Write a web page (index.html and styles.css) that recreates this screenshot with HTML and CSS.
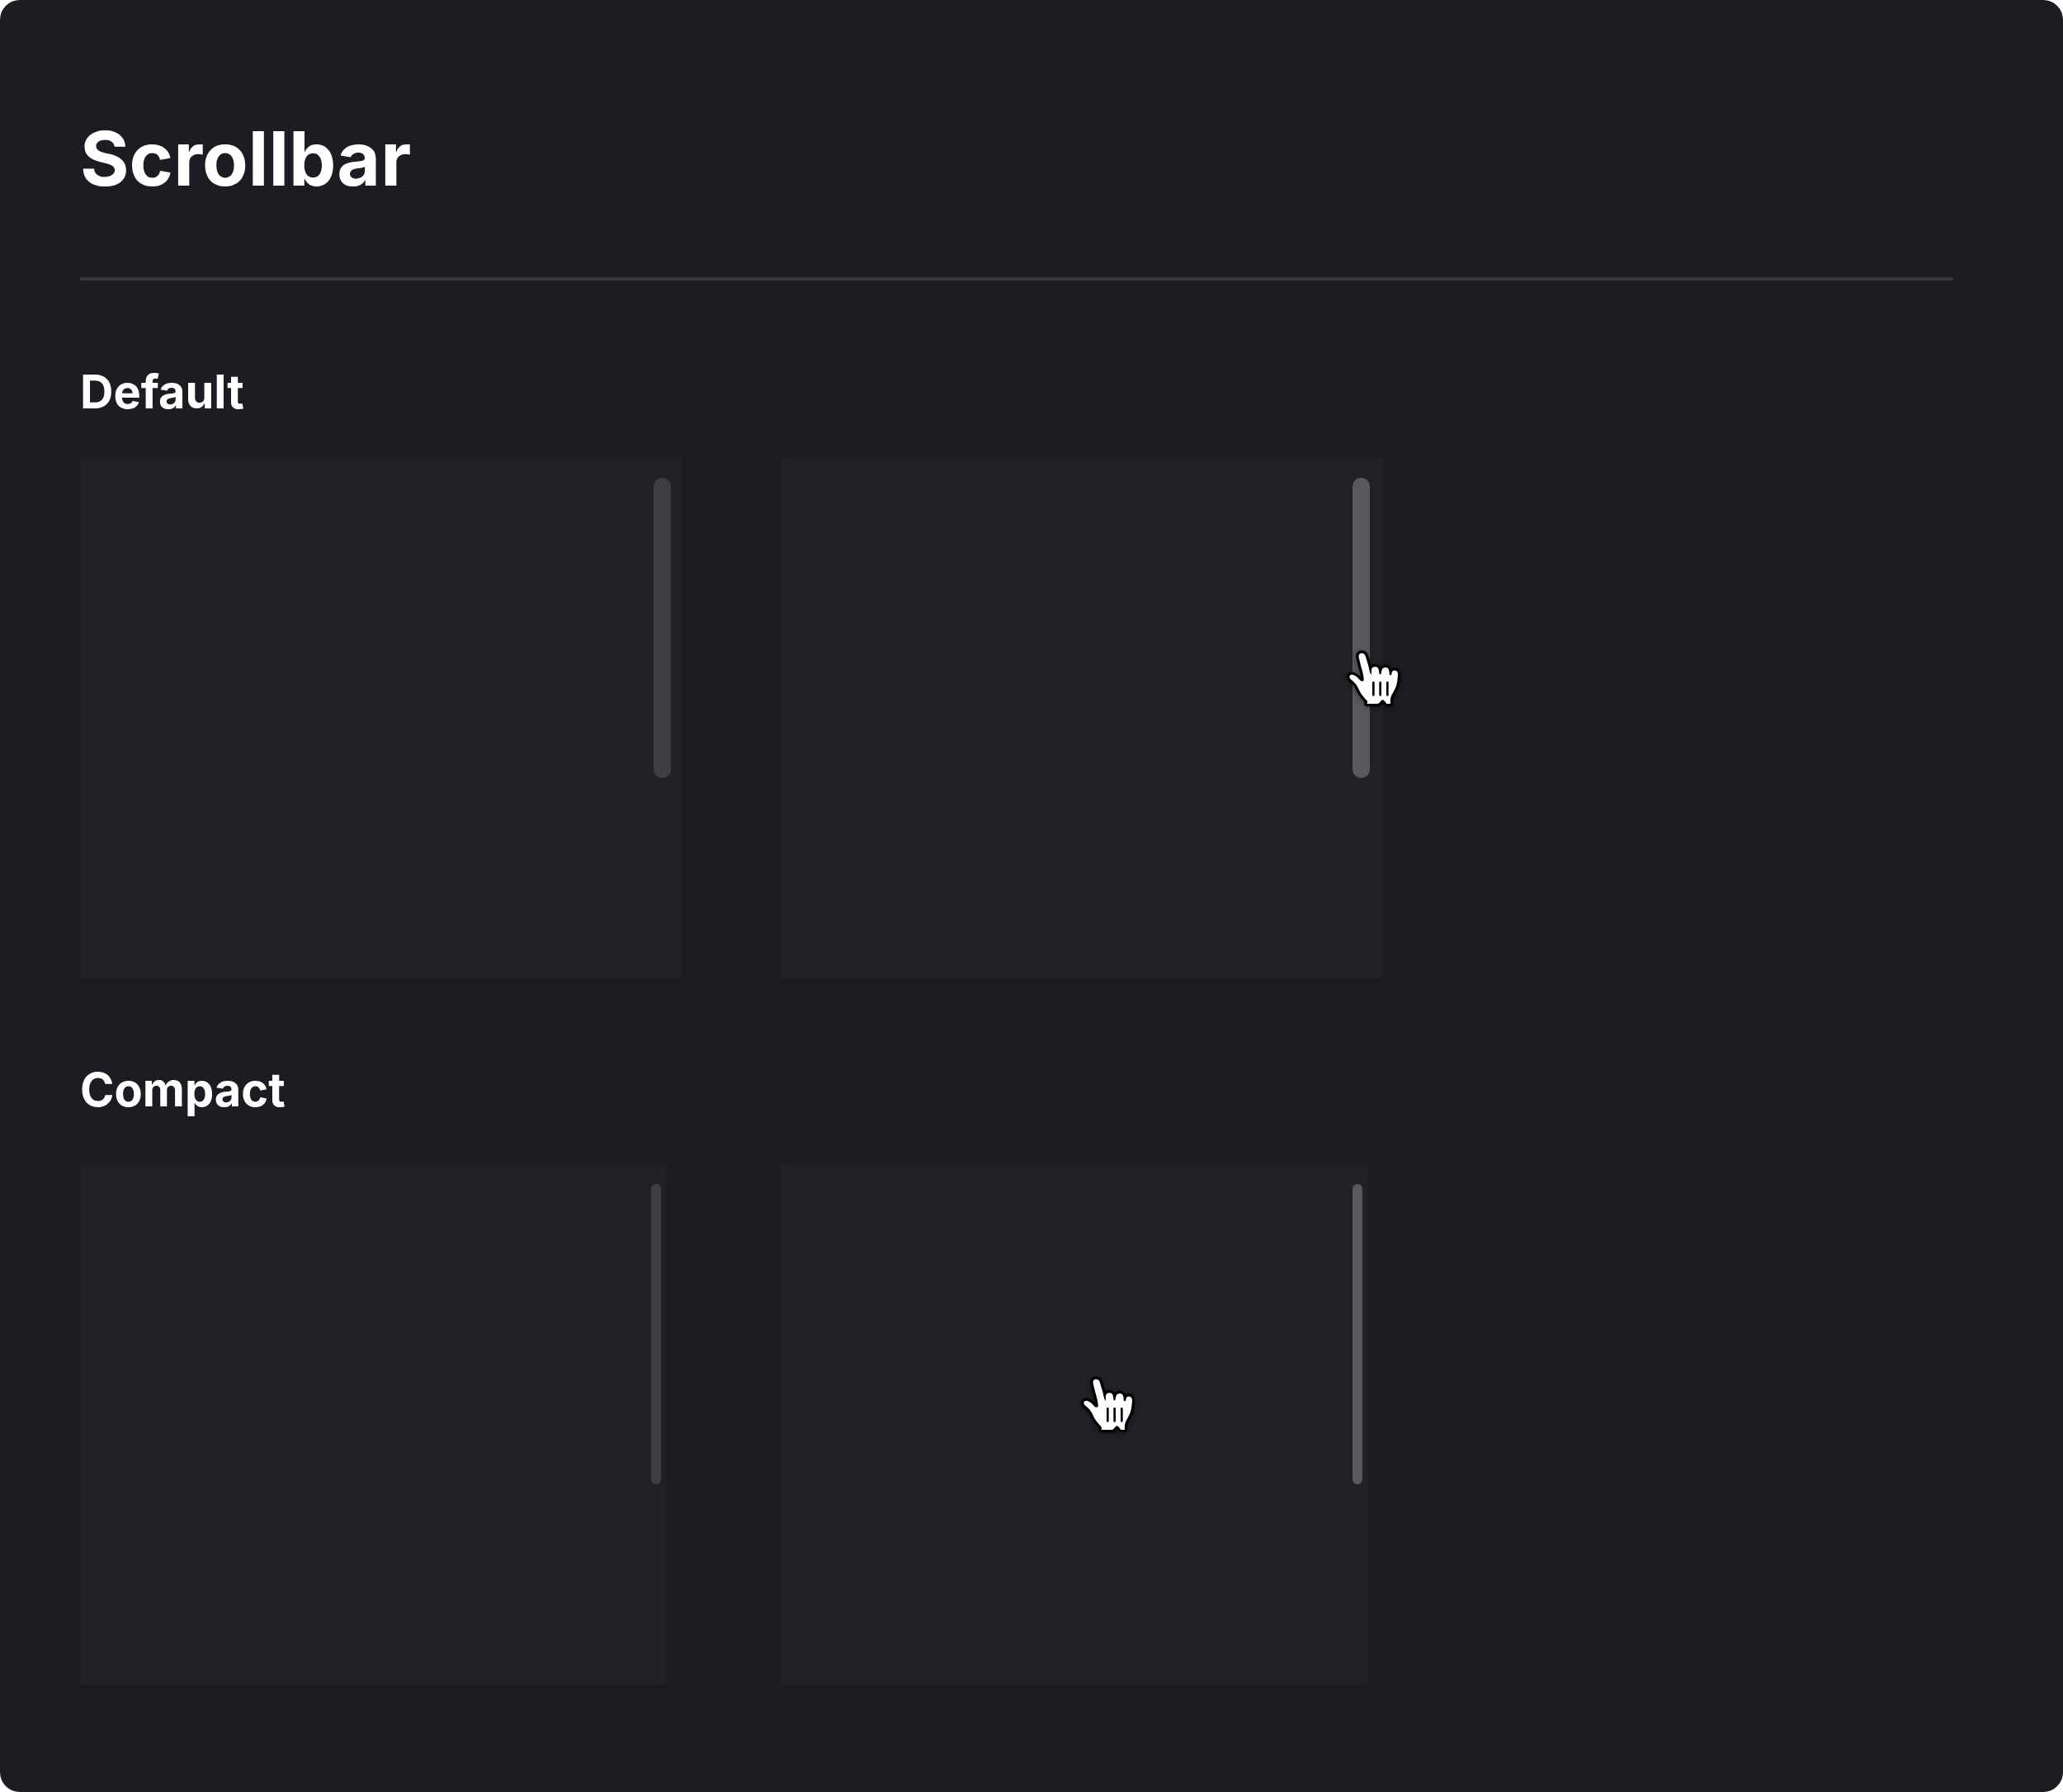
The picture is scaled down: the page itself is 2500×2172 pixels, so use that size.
FILE: index.html
```html
<!DOCTYPE html>
<html lang="en">
<head>
<meta charset="utf-8">
<meta name="viewport" content="width=device-width, initial-scale=1">
<title>Scrollbar</title>
<link rel="stylesheet" href="styles.css">
</head>
<body>
<svg class="symbols" aria-hidden="true">
  <symbol id="hand" viewBox="0 0 270 300">
    <path class="hand-shape" d="M80 80C78 69 84 65 91 65C99 65 103 70 105 78L114 108C117 120 119 132 124 144C127 140 125 134 126 126C127 118 132 114 140 115C148 115 152 121 153 129L155 142L160 142L163 128C165 120 170 117 177 117C185 117 189 122 190 130L192 144L198 145L200 136C202 130 206 127 212 128C220 129 222 135 222 144C221 157 220 171 216 184C212 197 203 210 197 223C195 231 194 239 195 249L181 249C176 243 172 234 166 235C160 237 158 245 150 249L110 249L111 239C100 228 90 216 83 203C77 190 71 177 60 168C54 163 47 158 46 152C46 145 52 142 59 144C70 147 77 155 85 164C89 168 95 168 98 164C98 150 95 138 91 124C87 109 83 95 80 80Z"/>
    <path class="hand-lines" d="M133 172V217M158 172V217M184 172V217"/>
  </symbol>
</svg>
<main class="page">
  <h1 class="title">Scrollbar</h1>
  <hr class="divider">
  <section class="group" aria-labelledby="default-heading">
    <h2 class="heading" id="default-heading">Default</h2>
    <div class="row">
      <div class="panel"><div class="bar"></div></div>
      <div class="panel panel-active">
        <div class="bar bar-hover"></div>
        <svg class="cursor cursor-on-bar" aria-hidden="true"><use href="#hand"/></svg>
      </div>
    </div>
  </section>
  <section class="group compact" aria-labelledby="compact-heading">
    <h2 class="heading" id="compact-heading">Compact</h2>
    <div class="row">
      <div class="panel"><div class="bar"></div></div>
      <div class="panel">
        <div class="bar bar-hover"></div>
        <svg class="cursor cursor-on-panel" aria-hidden="true"><use href="#hand"/></svg>
      </div>
    </div>
  </section>
</main>
</body>
</html>
```
FILE: styles.css
```css
* { box-sizing: border-box; }
body {
  margin: 0;
  background: #fff;
  font-family: Inter, "Liberation Sans", sans-serif;
}
.symbols { position: absolute; width: 0; height: 0; }
.page {
  min-height: 100vh;
  padding: 132px 133px 130px 97px;
  border-radius: 24px;
  background: #1c1d22;
  color: #fff;
}
.title {
  margin: 0;
  font-size: 91px;
  line-height: 120px;
  font-weight: 700;
}
.divider {
  height: 4px;
  margin: 84px 0 0;
  border: 0;
  background: #37373b;
}
.group { margin-top: 103px; }
.heading {
  margin: 0 0 48px;
  font-size: 56px;
  line-height: 64px;
  font-weight: 700;
}
.row { display: flex; gap: 121px; }
.panel {
  position: relative;
  display: flex;
  justify-content: flex-end;
  flex: 0 1 729px;
  min-height: 631px;
  padding: 24px 13px;
  background: #212227;
}
.panel-active { padding-right: 16px; }
.bar {
  width: 21px;
  height: 364px;
  border-radius: 11px;
  background: #3e3f43;
}
.bar-hover { background: #58595c; }
.compact .heading { margin-bottom: 58px; }
.compact .row { gap: 140px; }
.compact .panel { flex-basis: 710px; padding-right: 6px; }
.compact .bar { width: 12px; border-radius: 6px; }
.cursor {
  position: absolute;
  width: 90px;
  height: 100px;
  filter: drop-shadow(0 2px 3px rgba(0, 0, 0, 0.35));
}
.cursor-on-bar { right: -34px; top: 215px; }
.cursor-on-panel { left: 351px; top: 239px; }
.hand-shape {
  fill: #fff;
  stroke: #000;
  stroke-width: 20px;
  stroke-linejoin: round;
  paint-order: stroke;
}
.hand-lines {
  fill: none;
  stroke: #000;
  stroke-width: 8px;
  stroke-linecap: round;
}
```
